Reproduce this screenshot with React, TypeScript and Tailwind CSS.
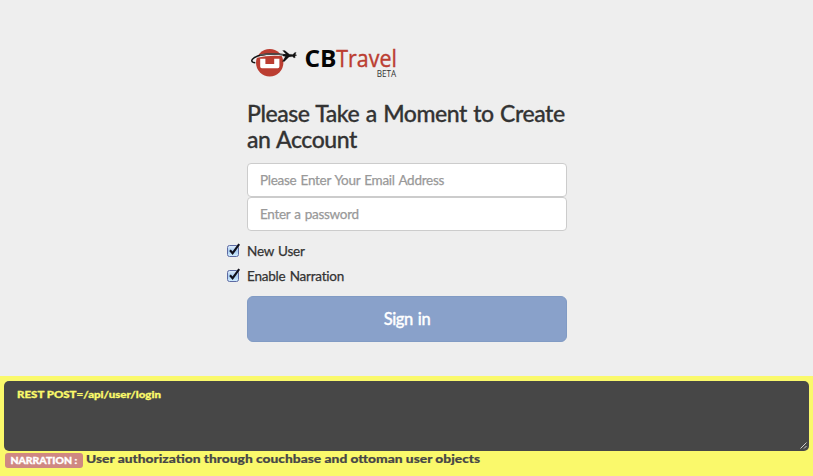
import { useState } from "react";

function Logo() {
  return (
    <svg className="block h-[40px] w-[160px]" viewBox="0 0 160 40" role="img" aria-label="CBTravel Beta">
      <circle cx="22.7" cy="20.8" r="13.7" fill="#bb3d31" />
      <path
        d="M13.2 16.8h5.2v5.2h8.8v-5.2h5.2v7.8q0 1.6-1.6 1.6H14.8q-1.6 0-1.6-1.6z"
        fill="#fff"
      />
      <path d="M10 15.2Q21 12.4 35 13.4" fill="none" stroke="#eee" strokeWidth="1.2" />
      <path
        d="M8.3 20.8C4.4 20.6 3.4 18.2 7 15.8C13 12 25 11.2 39 13"
        fill="none"
        stroke="#111"
        strokeWidth="1.5"
      />
      <path d="M13 13.1Q24 11.2 37 12.7" fill="none" stroke="#555" strokeWidth="1.5" />
      <path
        d="M36 12.4L39.3 12.4L35.6 8.6H37.8L42.4 12.2L45.8 12.5L47.8 10.4H49.2L48.2 12.6Q51.4 13.3 48 14.1L48.2 15.8H46.8L45.4 14.6L42 14.9L37.4 19.4H35.4L38.4 14.6L36 14z"
        fill="#111"
        stroke="#111"
        strokeWidth="0.2"
      />
      <text x="57.5" y="25.2" fontFamily="'Open Sans', sans-serif" fontSize="23.8" fontWeight="700" fill="#050505" textLength="32" lengthAdjust="spacingAndGlyphs">CB</text>
      <text x="89.3" y="25.2" fontFamily="'Open Sans', sans-serif" fontSize="23.8" fill="#bb3d31" stroke="#bb3d31" strokeWidth="0.4" textLength="60.5" lengthAdjust="spacingAndGlyphs">Travel</text>
      <text x="129.8" y="34.5" fontFamily="'Open Sans', sans-serif" fontSize="8.2" fill="#333" textLength="19.5" lengthAdjust="spacingAndGlyphs">BETA</text>
    </svg>
  );
}

function CheckRow({ label }: { label: string }) {
  const [checked, setChecked] = useState(true);
  return (
    <label className="-ml-5 flex h-5 items-center text-[13.5px] leading-5 tracking-[-0.22px] [word-spacing:1px] text-[#333] [-webkit-text-stroke:0.25px_#333]">
      <input type="checkbox" className="sr-only" checked={checked} onChange={() => setChecked(!checked)} />
      <svg className="mr-[5px] h-[16px] w-[15px] shrink-0" viewBox="0 0 15 16">
        <defs>
          <linearGradient id="box" x1="0" y1="0" x2="0" y2="1">
            <stop offset="0" stopColor="#e2eefb" />
            <stop offset="0.5" stopColor="#a8ccf1" />
            <stop offset="1" stopColor="#d3efff" />
          </linearGradient>
        </defs>
        <rect x="0.5" y="2.5" width="11" height="11" rx="2" fill="url(#box)" stroke="#5d6aa3" />
        {checked && <path d="M3 7.2L5.6 10.2L12.2 1.2" fill="none" stroke="#10101c" strokeWidth="2.1" />}
      </svg>
      {label}
    </label>
  );
}

export default function App() {
  return (
    <div className="flex h-[476px] w-[813px] flex-col overflow-hidden bg-[#eee] font-['Lato',sans-serif]">
      <main className="h-[376px] pt-[42px] pl-[247px]">
        <form className="flex w-[320px] flex-col" onSubmit={(e) => e.preventDefault()}>
          <Logo />
          <h1 className="mt-[18px] text-[23px] leading-[26px] font-medium tracking-[-0.44px] [word-spacing:1px] whitespace-nowrap text-[#333] [-webkit-text-stroke:0.3px_#333]">
            Please Take a Moment to Create
            <br />
            an Account
          </h1>
          <input
            className="mt-[11px] h-[34px] rounded-[4px] border border-[#ccc] bg-white px-3 text-[13.5px] tracking-[-0.28px] [word-spacing:1px] outline-none [-webkit-text-stroke:0.25px_#999] placeholder:text-[#999]"
            placeholder="Please Enter Your Email Address"
          />
          <input
            type="password"
            className="h-[34px] rounded-[4px] border border-[#ccc] bg-white px-3 text-[13.5px] tracking-[-0.3px] [word-spacing:1px] outline-none [-webkit-text-stroke:0.25px_#999] placeholder:text-[#999]"
            placeholder="Enter a password"
          />
          <div className="mt-[10px] flex flex-col gap-[5px]">
            <CheckRow label="New User" />
            <CheckRow label="Enable Narration" />
          </div>
          <button className="mt-[10px] h-[46px] rounded-[6px] border border-[#819bc4] bg-[#89a1ca] text-[16.5px] font-medium tracking-[-0.35px] [word-spacing:1px] text-white [-webkit-text-stroke:0.35px_#fff]">
            Sign in
          </button>
        </form>
      </main>
      <footer className="h-[100px] bg-[#faf96b] px-1 pt-[5px]">
        <div className="relative h-[70px] rounded-[5px] bg-[#474747] px-[13px] pt-[6px] text-[10px] leading-[15px] font-black text-[#faf96b]">
          <span className="block w-fit origin-left scale-x-[1.15] whitespace-nowrap [-webkit-text-stroke:0.3px_#faf96b]">REST POST=/api/user/login</span>
          <svg className="absolute right-[2px] bottom-[2px] h-[7px] w-[7px]" viewBox="0 0 7 7">
            <path d="M0.5 6.5L6.5 0.5M4 6.5L6.5 4" stroke="#ddd" strokeWidth="0.9" />
          </svg>
        </div>
        <div className="flex">
          <span className="mt-[2px] ml-px flex h-[15px] w-[78px] items-center justify-center rounded-[3px] bg-[#cf8882] text-[9px] font-black whitespace-nowrap text-white">
            <span className="scale-x-[1.16] [-webkit-text-stroke:0.3px_#fff]">NARRATION :</span>
          </span>
          <span className="ml-[3px] block origin-left scale-x-[1.149] text-[12px] leading-[16px] font-black whitespace-nowrap text-[#474747] [-webkit-text-stroke:0.2px_#474747]">
            User authorization through couchbase and ottoman user objects
          </span>
        </div>
      </footer>
    </div>
  );
}
